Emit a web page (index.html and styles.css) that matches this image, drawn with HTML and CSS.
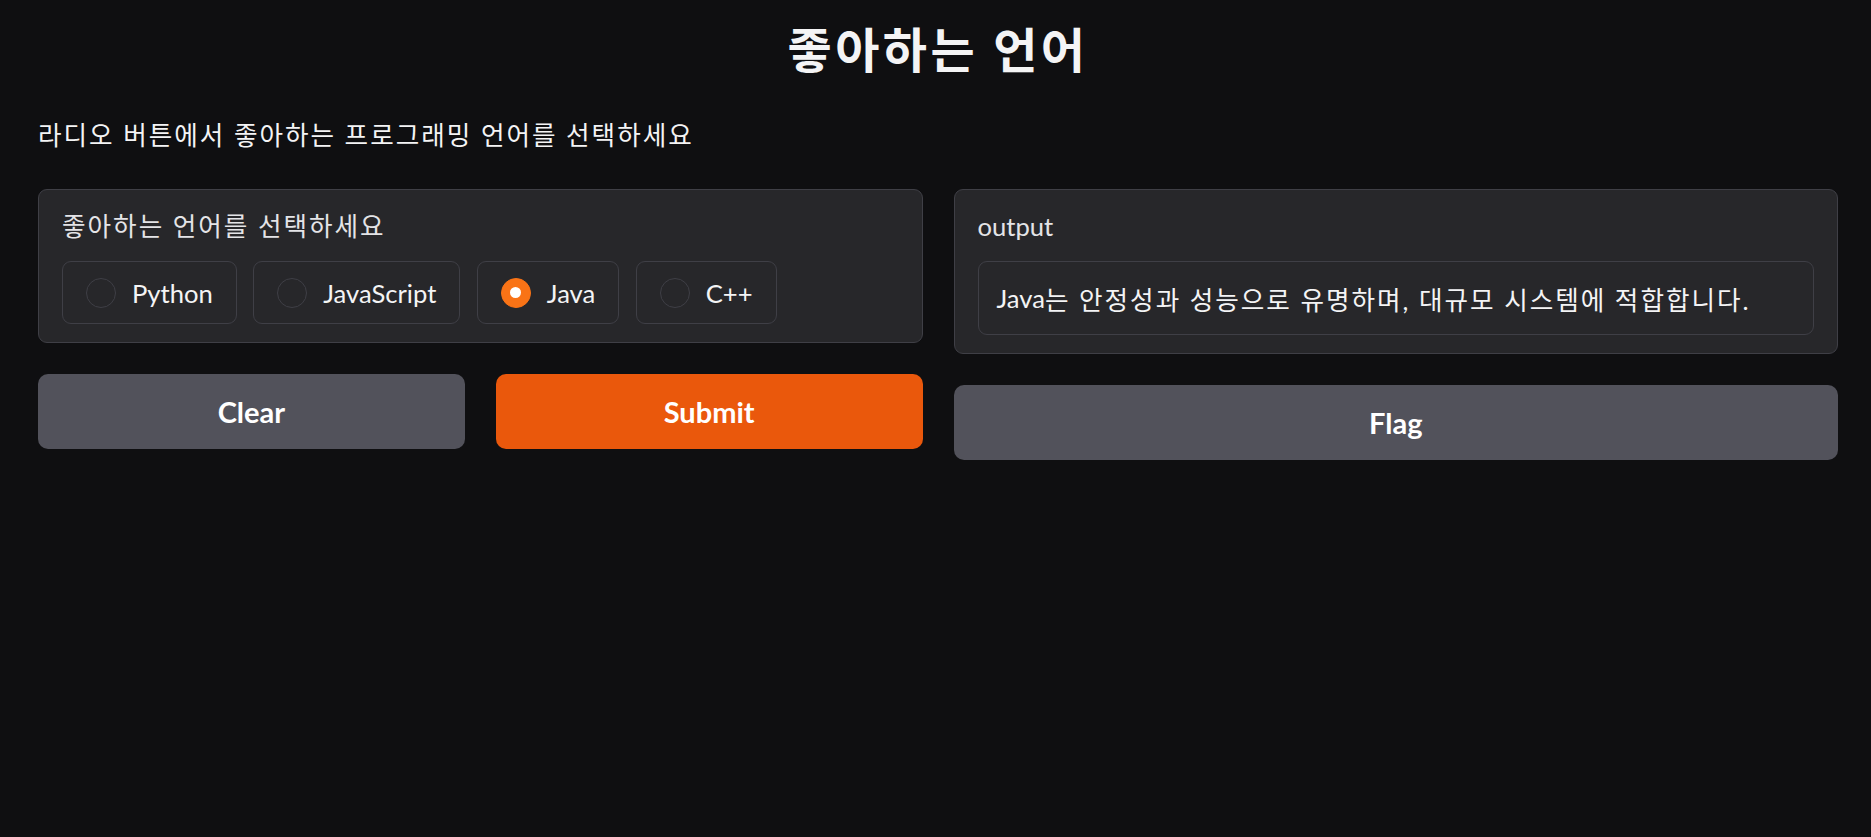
FILE: index.html
```html
<!DOCTYPE html>
<html lang="ko">
<head>
<meta charset="utf-8">
<title>좋아하는 언어</title>
<link rel="stylesheet" href="styles.css">
</head>
<body>
<div class="app">
  <h1 class="title ko">좋아하는 언어</h1>
  <p class="desc ko">라디오 버튼에서 좋아하는 프로그래밍 언어를 선택하세요</p>
  <div class="cols">
    <div class="col">
      <div class="block">
        <div class="block-label ko">좋아하는 언어를 선택하세요</div>
        <div class="options">
          <label class="option"><span class="radio"></span><span class="opt-text">Python</span></label>
          <label class="option"><span class="radio"></span><span class="opt-text">JavaScript</span></label>
          <label class="option"><span class="radio checked"></span><span class="opt-text">Java</span></label>
          <label class="option"><span class="radio"></span><span class="opt-text">C++</span></label>
        </div>
      </div>
      <div class="btn-row">
        <button class="btn secondary">Clear</button>
        <button class="btn primary">Submit</button>
      </div>
    </div>
    <div class="col">
      <div class="block">
        <div class="block-label">output</div>
        <div class="textbox ko"><span class="lat">Java</span>는 안정성과 성능으로 유명하며, 대규모 시스템에 적합합니다.</div>
      </div>
      <button class="btn secondary solo">Flag</button>
    </div>
  </div>
</div>
</body>
</html>
```

FILE: styles.css
```css
* { box-sizing: border-box; }

html, body {
  margin: 0;
  background: #0f0f11;
}

body {
  font-family: Lato, "Noto Sans CJK KR", sans-serif;
  color: #f4f4f5;
  font-size: 25.6px;
}

.ko { letter-spacing: 0.078em; }
.lat { letter-spacing: 0; }

.app {
  padding: 0 33px 0 38px;
}

.title {
  margin: 20px 0 0;
  font-size: 48px;
  line-height: 60px;
  font-weight: 700;
  text-align: center;
  color: #f4f4f5;
  letter-spacing: 0.072em;
}

.desc {
  margin: 37px 0 0;
  font-size: 25.6px;
  line-height: 36px;
}

.cols {
  margin-top: 36px;
  display: grid;
  grid-template-columns: 1fr 1fr;
  gap: 31px;
  align-items: start;
}

.col {
  display: flex;
  flex-direction: column;
  gap: 31px;
}

.block {
  background: #27272a;
  border: 1px solid #3f3f46;
  border-radius: 9px;
  padding: 18px 23px 18px 23px;
}

.block-label {
  font-size: 25.6px;
  line-height: 36px;
  color: #e4e4e7;
  margin-bottom: 17px;
}

.options {
  display: flex;
  gap: 16.5px;
}

.option {
  display: flex;
  align-items: center;
  gap: 16px;
  height: 63px;
  padding: 0 23px;
  border: 1px solid #3f3f46;
  border-radius: 9px;
  background: #27272a;
  font-size: 25.6px;
  color: #f4f4f5;
}

.radio {
  width: 30px;
  height: 30px;
  border-radius: 50%;
  border: 1.5px solid #3f3f46;
  background: #27272a;
  flex: none;
  display: flex;
  align-items: center;
  justify-content: center;
}

.radio.checked {
  background: #f97316;
  border-color: #f97316;
}

.radio.checked::after {
  content: "";
  width: 11px;
  height: 11px;
  border-radius: 50%;
  background: #ffffff;
}

.textbox {
  height: 74px;
  border: 1px solid #3f3f46;
  border-radius: 9px;
  background: #27272a;
  padding: 0 18px;
  display: flex;
  align-items: center;
  font-size: 25.6px;
  color: #f4f4f5;
}

.btn-row {
  display: flex;
  gap: 31px;
}

.btn {
  flex: 1;
  height: 75px;
  border: none;
  border-radius: 10px;
  font-family: inherit;
  font-size: 29px;
  font-weight: 700;
  color: #ffffff;
  cursor: pointer;
}

.btn.solo { flex: none; }

.btn.secondary { background: #52525b; }
.btn.primary { background: #ea580c; }
```
